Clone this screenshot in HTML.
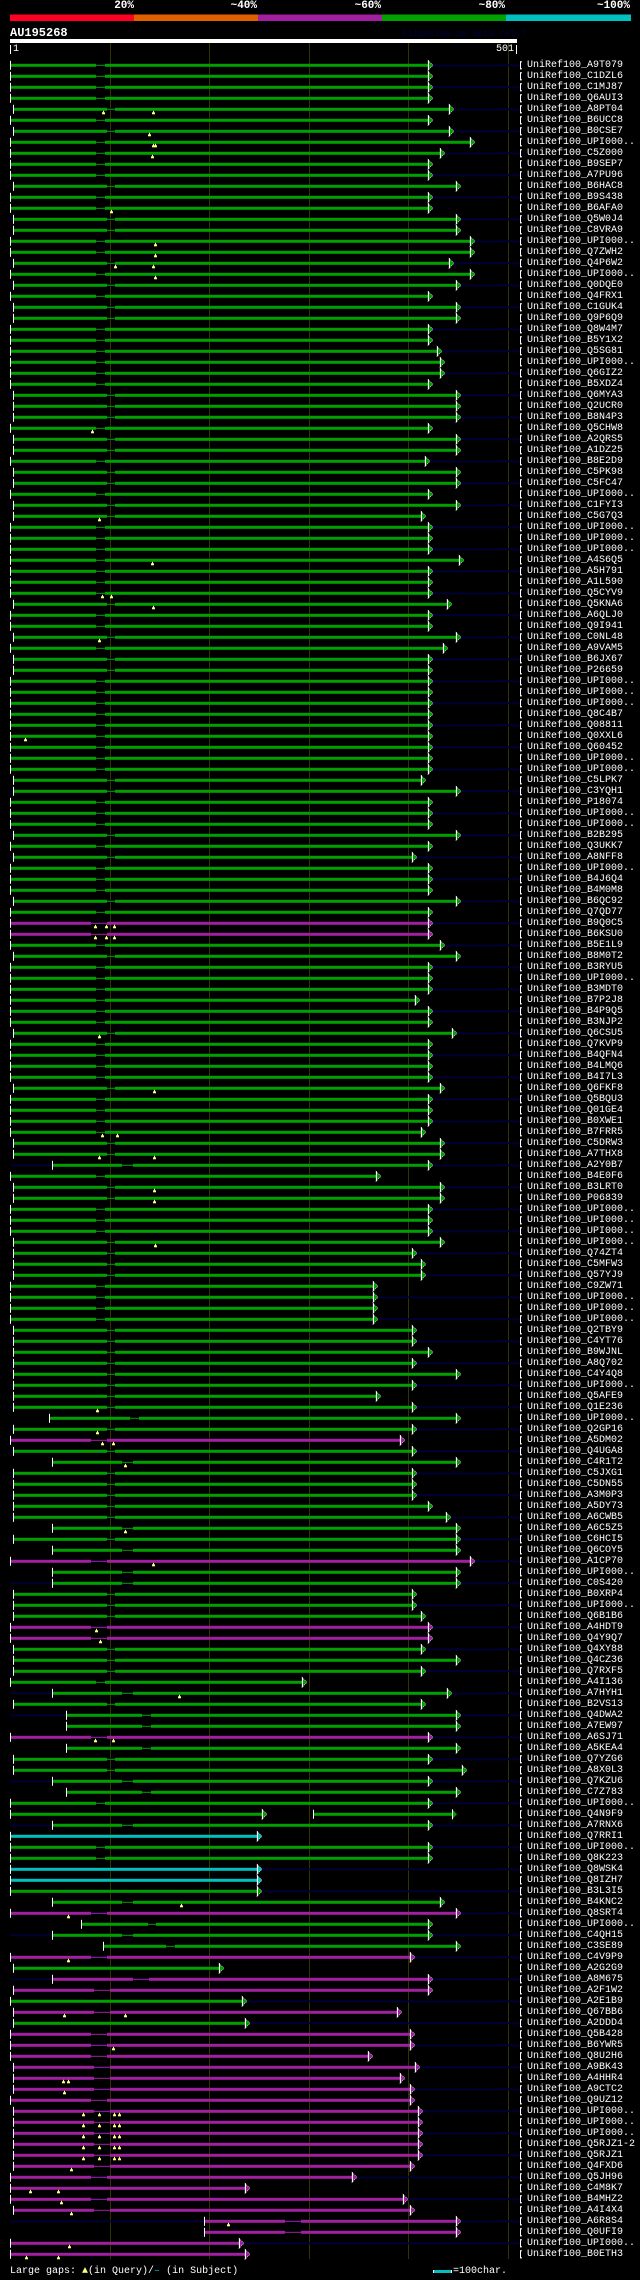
<!DOCTYPE html>
<html><head><meta charset="utf-8">
<style>
html,body{margin:0;padding:0;background:#000;}
body{width:640px;height:2280px;position:relative;overflow:hidden;font-family:"Liberation Mono","DejaVu Sans Mono",monospace;color:#fff;}
#svg{position:absolute;left:0;top:0;}
.t{position:absolute;font-size:11px;font-weight:bold;white-space:pre;}
#labels{position:absolute;left:527px;top:59.8px;margin:0;font-family:"Liberation Mono",monospace;font-size:10px;line-height:11px;color:#fff;white-space:pre;}
</style></head><body>
<svg id="svg" width="640" height="2280" xmlns="http://www.w3.org/2000/svg"></svg>
<div class="t" style="left:100px;top:0px;width:34px;text-align:right">20%</div>
<div class="t" style="left:200px;top:0px;width:57px;text-align:right">~40%</div>
<div class="t" style="left:320px;top:0px;width:61px;text-align:right">~60%</div>
<div class="t" style="left:440px;top:0px;width:65px;text-align:right">~80%</div>
<div class="t" style="left:560px;top:0px;width:70px;text-align:right">~100%</div>
<div class="t" style="left:10px;top:26px;font-size:12px">AU195268</div>
<div style="position:absolute;left:402px;top:29px;font-size:9px;color:#000040;white-space:pre">AlignView.pm Beta rel.7</div>
<div style="position:absolute;left:13px;top:44px;font-size:10px">1</div>
<div style="position:absolute;left:480px;top:44px;width:34px;text-align:right;font-size:10px">501</div>
<pre id="labels">UniRef100_A9T079
UniRef100_C1DZL6
UniRef100_C1MJ87
UniRef100_Q6AUI3
UniRef100_A8PT04
UniRef100_B6UCC8
UniRef100_B0CSE7
UniRef100_UPI000..
UniRef100_C5Z000
UniRef100_B9SEP7
UniRef100_A7PU96
UniRef100_B6HAC8
UniRef100_B9S438
UniRef100_B6AFA0
UniRef100_Q5W0J4
UniRef100_C8VRA9
UniRef100_UPI000..
UniRef100_Q7ZWH2
UniRef100_Q4P6W2
UniRef100_UPI000..
UniRef100_Q0DQE0
UniRef100_Q4FRX1
UniRef100_C1GUK4
UniRef100_Q9P6Q9
UniRef100_Q8W4M7
UniRef100_B5Y1X2
UniRef100_Q5SG81
UniRef100_UPI000..
UniRef100_Q6GIZ2
UniRef100_B5XDZ4
UniRef100_Q6MYA3
UniRef100_Q2UCR0
UniRef100_B8N4P3
UniRef100_Q5CHW8
UniRef100_A2QRS5
UniRef100_A1DZ25
UniRef100_B8E2D9
UniRef100_C5PK98
UniRef100_C5FC47
UniRef100_UPI000..
UniRef100_C1FYI3
UniRef100_C5G7Q3
UniRef100_UPI000..
UniRef100_UPI000..
UniRef100_UPI000..
UniRef100_A4S6Q5
UniRef100_A5H791
UniRef100_A1L590
UniRef100_Q5CYV9
UniRef100_Q5KNA6
UniRef100_A6QLJ0
UniRef100_Q9I941
UniRef100_C0NL48
UniRef100_A9VAM5
UniRef100_B6JX67
UniRef100_P26659
UniRef100_UPI000..
UniRef100_UPI000..
UniRef100_UPI000..
UniRef100_Q8C4B7
UniRef100_Q08811
UniRef100_Q0XXL6
UniRef100_Q60452
UniRef100_UPI000..
UniRef100_UPI000..
UniRef100_C5LPK7
UniRef100_C3YQH1
UniRef100_P18074
UniRef100_UPI000..
UniRef100_UPI000..
UniRef100_B2B295
UniRef100_Q3UKK7
UniRef100_A8NFF8
UniRef100_UPI000..
UniRef100_B4J6Q4
UniRef100_B4M0M8
UniRef100_B6QC92
UniRef100_Q7QD77
UniRef100_B9Q0C5
UniRef100_B6KSU0
UniRef100_B5E1L9
UniRef100_B8M0T2
UniRef100_B3RYU5
UniRef100_UPI000..
UniRef100_B3MDT0
UniRef100_B7P2J8
UniRef100_B4P9Q5
UniRef100_B3NJP2
UniRef100_Q6CSU5
UniRef100_Q7KVP9
UniRef100_B4QFN4
UniRef100_B4LMQ6
UniRef100_B4I7L3
UniRef100_Q6FKF8
UniRef100_Q5BQU3
UniRef100_Q01GE4
UniRef100_B0XWE1
UniRef100_B7FRR5
UniRef100_C5DRW3
UniRef100_A7THX8
UniRef100_A2Y0B7
UniRef100_B4E0F6
UniRef100_B3LRT0
UniRef100_P06839
UniRef100_UPI000..
UniRef100_UPI000..
UniRef100_UPI000..
UniRef100_UPI000..
UniRef100_Q74ZT4
UniRef100_C5MFW3
UniRef100_Q57YJ9
UniRef100_C9ZW71
UniRef100_UPI000..
UniRef100_UPI000..
UniRef100_UPI000..
UniRef100_Q2TBY9
UniRef100_C4YT76
UniRef100_B9WJNL
UniRef100_A8Q702
UniRef100_C4Y4Q8
UniRef100_UPI000..
UniRef100_Q5AFE9
UniRef100_Q1E236
UniRef100_UPI000..
UniRef100_Q2GP16
UniRef100_A5DM02
UniRef100_Q4UGA8
UniRef100_C4R1T2
UniRef100_C5JXG1
UniRef100_C5DN55
UniRef100_A3M0P3
UniRef100_A5DY73
UniRef100_A6CWB5
UniRef100_A6C5Z5
UniRef100_C6HCI5
UniRef100_Q6COY5
UniRef100_A1CP70
UniRef100_UPI000..
UniRef100_C0S420
UniRef100_B0XRP4
UniRef100_UPI000..
UniRef100_Q6B1B6
UniRef100_A4HDT9
UniRef100_Q4Y9Q7
UniRef100_Q4XY88
UniRef100_Q4CZ36
UniRef100_Q7RXF5
UniRef100_A4I136
UniRef100_A7HYH1
UniRef100_B2VS13
UniRef100_Q4DWA2
UniRef100_A7EW97
UniRef100_A6SJ71
UniRef100_A5KEA4
UniRef100_Q7YZG6
UniRef100_A8X0L3
UniRef100_Q7KZU6
UniRef100_C7Z783
UniRef100_UPI000..
UniRef100_Q4N9F9
UniRef100_A7RNX6
UniRef100_Q7RRI1
UniRef100_UPI000..
UniRef100_Q8K223
UniRef100_Q8WSK4
UniRef100_Q8IZH7
UniRef100_B3L3I5
UniRef100_B4KNC2
UniRef100_Q8SRT4
UniRef100_UPI000..
UniRef100_C4QH15
UniRef100_C3SE89
UniRef100_C4V9P9
UniRef100_A2G2G9
UniRef100_A8M675
UniRef100_A2F1W2
UniRef100_A2E1B9
UniRef100_Q67BB6
UniRef100_A2DDD4
UniRef100_Q5B428
UniRef100_B6YWR5
UniRef100_Q8U2H6
UniRef100_A9BK43
UniRef100_A4HHR4
UniRef100_A9CTC2
UniRef100_Q9UZ12
UniRef100_UPI000..
UniRef100_UPI000..
UniRef100_UPI000..
UniRef100_Q5RJZ1-2
UniRef100_Q5RJZ1
UniRef100_Q4FXD6
UniRef100_Q5JH96
UniRef100_C4M8K7
UniRef100_B4MHZ2
UniRef100_A4I4X4
UniRef100_A6R8S4
UniRef100_Q0UFI9
UniRef100_UPI000..
UniRef100_B0ETH3</pre>
<div style="position:absolute;left:10px;top:2266px;font-size:10px;white-space:pre">Large gaps: <span style="color:#ffff80">▲</span>(in Query)/<span style="color:#00c0c0">–</span> (in Subject)</div>
<div style="position:absolute;left:433px;top:2270px;width:17px;height:3px;background:#00c0c0;border-left:1px solid #fff;border-right:1px solid #fff"></div>
<div style="position:absolute;left:453px;top:2266px;font-size:10px">=100char.</div>
<script>
var D="11,428,g;11,428,g;11,428,g;11,428,g;14,449,g,103,153;11,428,g;14,449,g,149;11,470,g,153,155;11,440,g,152;11,428,g;11,428,g;14,456,g;11,428,g;11,428,g,111;14,456,g;14,456,g;11,470,g,155;11,470,g,155;14,449,g,115,153;11,470,g,155;14,456,g;11,428,g;14,456,g;14,456,g;11,428,g;11,428,g;11,437,g;11,440,g;11,440,g;"+
"11,428,g;14,456,g;14,456,g;14,456,g;11,428,g,92;14,456,g;14,456,g;11,425,g;14,456,g;14,456,g;11,428,g;14,456,g;14,421,g,99;11,428,g;11,428,g;11,428,g;11,459,g,152;11,428,g;11,428,g;11,428,g,102,111;14,447,g,153;11,428,g;11,428,g;14,456,g,99;11,443,g;14,428,g;14,428,g;11,428,g;"+
"11,428,g;11,428,g;11,428,g;11,428,g;11,428,g,25;11,428,g;11,428,g;11,428,g;14,421,g;14,456,g;11,428,g;11,428,g;11,428,g;14,456,g;11,428,g;14,412,g;11,428,g;11,428,g;11,428,g;14,456,g;11,428,g;11,428,m,95,106,114;11,428,m,95,106,114;11,440,g;14,456,g;11,428,g;11,428,g;11,428,g;11,415,g;"+
"11,428,g;11,428,g;14,452,g,99;11,428,g;11,428,g;11,428,g;11,428,g;14,440,g,154;11,428,g;11,428,g;11,428,g;11,421,g,102,117;14,440,g;14,440,g,99,154;53,428,g;11,376,g;14,440,g,154;14,440,g,154;11,428,g;11,428,g;11,428,g;14,440,g,155;14,412,g;14,421,g;14,421,g;11,373,g;11,373,g;11,373,g;11,373,g;"+
"14,412,g;14,412,g;14,428,g;14,412,g;14,456,g;14,412,g;14,376,g;14,412,g,97;50,456,g;14,412,g,97;11,400,m,102,113;14,412,g;53,456,g,125;14,412,g;14,412,g;14,412,g;14,428,g;14,446,g;53,456,g,125;14,456,g;53,456,g;11,470,m,153;53,456,g;53,456,g;14,412,g;14,412,g;14,421,g;11,428,m,96;11,428,m,100;"+
"14,421,g;14,456,g;14,421,g;11,302,g;53,447,g,179;14,421,g;67,456,g;67,456,g;11,428,m,95,113;67,456,g;14,428,g;14,462,g;53,428,g;67,456,g;11,428,g;11,262,g;53,428,g;11,257,c;11,428,g;11,428,g;11,257,c;11,257,c;11,257,g;53,440,g,181;11,456,m,68;82,428,g;53,428,g;104,456,g;11,410,m,68;"+
"14,219,g;53,428,m;14,428,m;11,242,g;14,397,m,64,125;14,245,g;11,410,m;11,410,m,113;11,368,m;14,415,m;14,400,m,63,68;14,410,m,64;11,410,m;14,418,m,83,99,114,119;14,418,m,83,99,114,119;14,418,m,83,99,114,119;14,418,m,83,99,114,119;14,418,m,83,99,114,119;14,410,m,71;11,352,m;11,245,m,30,58;11,403,m,61;14,410,m,71;205,456,m,228;205,456,m;11,239,m,69;11,245,m,26,58";
var C={g:"#00a000",m:"#a020a0",c:"#00c0c0"};
var s='';
// top color bar
var seg=[[10,134,"#ff0022"],[134,258,"#e06000"],[258,382,"#a020a0"],[382,506,"#00a000"],[506,631,"#00c0c0"]];
seg.forEach(function(q){s+='<rect x="'+q[0]+'" y="14.5" width="'+(q[1]-q[0])+'" height="6.5" fill="'+q[2]+'"/>';});
s+='<rect x="10" y="39" width="507" height="4" fill="#fff"/>';
s+='<rect x="10" y="45" width="1" height="9" fill="#fff"/><rect x="516" y="45" width="1" height="9" fill="#fff"/>';
[110,209,309,408,508].forEach(function(x){s+='<rect x="'+x+'" y="43" width="1" height="2216" fill="#333300"/>';});
var rows=D.split(';');
rows.forEach(function(r,i){
 var p=r.split(','),st=+p[0],en=+p[1],c=p[2],col=C[c];
 var y=65.3+i*11;
 if(i%2==0) s+='<rect x="10" y="'+(y-1)+'" width="510" height="2" fill="#000033"/>';
 var g=null;
 if(c!='c' && en>300){
  if(c=='m') g=[st+80,st+96];
  else if(st==11) g=[96,105]; else if(st==14) g=[107,115]; else if(st==53) g=[122,133]; else if(st==67) g=[142,151]; else if(st==50) g=[130,139]; else if(st==82) g=[148,156]; else if(st==104) g=[166,175]; else g=[st+20,st+30];
 }
 if(g){
  s+='<rect x="'+st+'" y="'+(y-1.5)+'" width="'+(g[0]-st)+'" height="3" fill="'+col+'"/>';
  s+='<rect x="'+g[0]+'" y="'+(y-0.5)+'" width="'+(g[1]-g[0])+'" height="1" fill="'+col+'"/>';
  s+='<rect x="'+g[1]+'" y="'+(y-1.5)+'" width="'+(en-g[1])+'" height="3" fill="'+col+'"/>';
 } else {
  s+='<rect x="'+st+'" y="'+(y-1.5)+'" width="'+(en-st)+'" height="3" fill="'+col+'"/>';
 }
 if(i==159){s+='<rect x="313" y="'+(y-1.5)+'" width="139" height="3" fill="'+col+'"/><rect x="313" y="'+(y-4.5)+'" width="1" height="9" fill="#fff"/><polygon points="452,'+(y-5)+' 457,'+y+' 452,'+(y+5)+'" fill="'+col+'"/><rect x="452" y="'+(y-5)+'" width="1" height="10" fill="#fff"/>';}
 s+='<rect x="'+(st-1)+'" y="'+(y-4.5)+'" width="1" height="9" fill="#fff"/>';
 s+='<polygon points="'+en+','+(y-5)+' '+(en+5)+','+y+' '+en+','+(y+5)+'" fill="'+col+'" stroke="#fff" stroke-width="0.6" stroke-dasharray="1,1"/>';
 s+='<rect x="'+en+'" y="'+(y-5)+'" width="1" height="10" fill="#fff"/>';
 for(var k=3;k<p.length;k++){var mx=+p[k];s+='<rect x="'+(mx-1)+'" y="'+(y+3)+'" width="3" height="2" fill="#ffff80"/><rect x="'+mx+'" y="'+(y+1.5)+'" width="1" height="2" fill="#ffff80"/>';}
 s+='<rect x="520" y="'+(y-4)+'" width="1" height="8" fill="#fff"/><rect x="520" y="'+(y-4)+'" width="2" height="1" fill="#fff"/><rect x="520" y="'+(y+3)+'" width="2" height="1" fill="#fff"/>';
});
document.getElementById('svg').innerHTML=s;
</script>
</body></html>
